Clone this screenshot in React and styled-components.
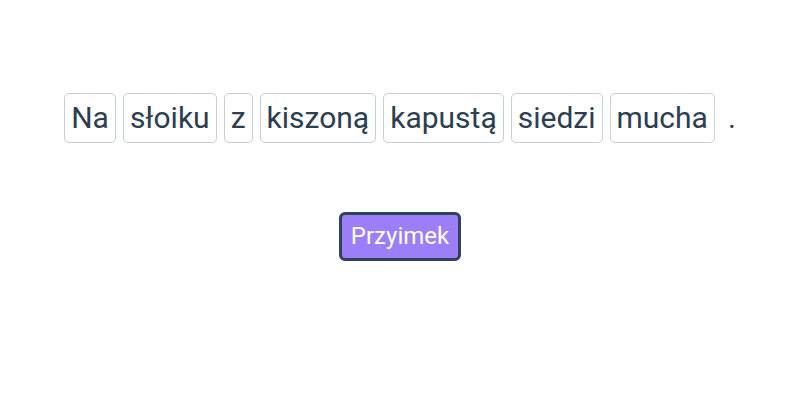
import styled, { createGlobalStyle } from "styled-components";

const GlobalStyle = createGlobalStyle`
  body {
    margin: 0;
    background: #ffffff;
    font-family: Roboto, "Noto Sans", sans-serif;
    color: #2c3e50;
  }
`;

const Page = styled.div`
  width: 800px;
  height: 400px;
  display: flex;
  flex-direction: column;
  align-items: center;
  padding-top: 93px;
  box-sizing: border-box;
`;

const Sentence = styled.div`
  display: flex;
  align-items: center;
  gap: 7px;
`;

const Word = styled.span`
  display: inline-block;
  font-size: 30px;
  line-height: 36px;
  padding: 6px 6px;
  border: 1px solid #c8cdd2;
  border-radius: 5px;
  color: #2c3e50;
`;

const Dot = styled.span`
  font-size: 30px;
  line-height: 36px;
  margin-left: 6px;
`;

const Tag = styled.button`
  margin-top: 69px;
  font-family: Roboto, "Noto Sans", sans-serif;
  font-size: 24px;
  line-height: 29px;
  padding: 7px 9px;
  color: #ffffff;
  background: #9b7ef8;
  border: 3px solid #2f4357;
  border-radius: 6px;
`;

const words = ["Na", "słoiku", "z", "kiszoną", "kapustą", "siedzi", "mucha"];

const App = () => {
  return (
    <>
      <GlobalStyle />
      <Page>
        <Sentence>
          {words.map((w) => (
            <Word key={w}>{w}</Word>
          ))}
          <Dot>.</Dot>
        </Sentence>
        <Tag>Przyimek</Tag>
      </Page>
    </>
  );
};

export default App;
